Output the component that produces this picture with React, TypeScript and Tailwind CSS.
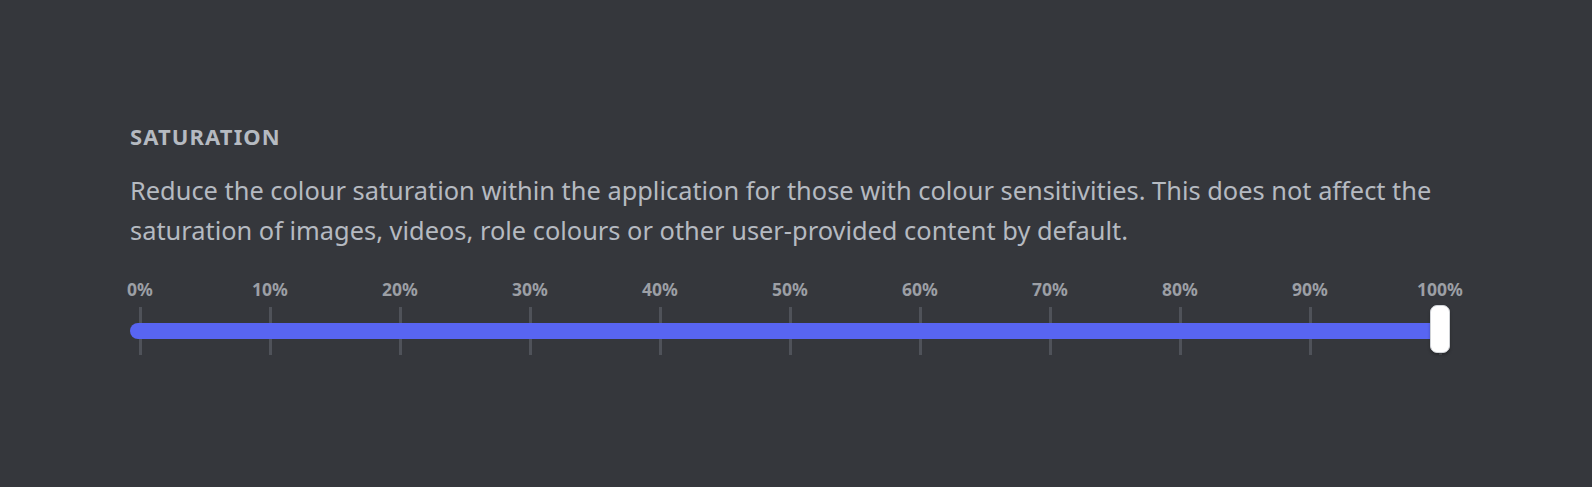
import React from "react";

const marks = ["0%", "10%", "20%", "30%", "40%", "50%", "60%", "70%", "80%", "90%", "100%"];

function SaturationSlider() {
  return (
    <div className="w-[1320px]">
      {/* percentage labels, centred over each tick */}
      <div className="flex justify-between px-[10px] h-[20px]">
        {marks.map((m) => (
          <div key={m} className="w-0 flex justify-center">
            <span className="shrink-0 whitespace-nowrap text-[17.5px] leading-[20px] font-bold text-[#9c9fa5]">
              {m}
            </span>
          </div>
        ))}
      </div>
      <div className="relative mt-[8px] h-[48px]">
        {/* tick marks */}
        <div className="flex justify-between px-[10px] h-full">
          {marks.map((m) => (
            <div key={m} className="w-0 flex justify-center">
              <div className="shrink-0 w-[3px] h-[48px] bg-[#4f5259]" />
            </div>
          ))}
        </div>
        {/* filled track */}
        <div className="absolute left-0 right-[10px] top-[16px] h-[16px] rounded-full bg-[#5865f2]" />
        {/* grabber */}
        <div className="absolute right-0 top-[-2px] w-[20px] h-[48px] rounded-[7px] bg-white border border-[#cfd2d6] shadow-[0_2px_3px_rgba(0,0,0,0.25)]" />
      </div>
    </div>
  );
}

export default function App() {
  return (
    <div
      className="w-[1592px] h-[487px] bg-[#35373c] pl-[130px] pt-[124px]"
      style={{ fontFamily: '"Noto Sans", "Liberation Sans", sans-serif' }}
    >
      <h2 className="text-[22px] leading-[24px] font-bold text-[#b5bac1] tracking-[0.05em]">SATURATION</h2>
      <p className="mt-[23px] w-[1320px] text-[25.4px] leading-[39.5px] text-[#b5bac1]">
        Reduce the colour saturation within the application for those with colour sensitivities. This does not affect the
        saturation of images, videos, role colours or other user-provided content by default.
      </p>
      <div className="mt-[29px]">
        <SaturationSlider />
      </div>
    </div>
  );
}
